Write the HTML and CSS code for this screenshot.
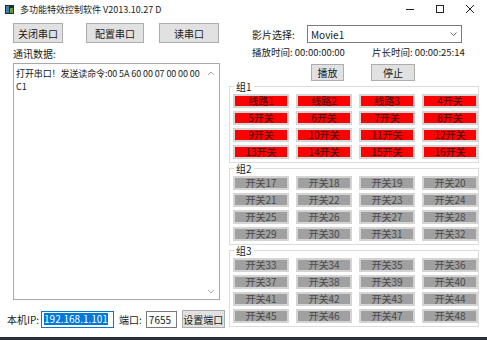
FILE: index.html
```html
<!DOCTYPE html>
<html lang="zh">
<head>
    <meta charset="UTF-8">
    <title>多功能特效控制软件</title>
    <link rel="stylesheet" href="styles.css">
</head>
<body>
    <div class="titlebar">
        <svg class="app-icon" width="9" height="9" viewBox="0 0 9 9">
            <rect width="9" height="9" fill="#1d2b33"/>
            <rect x="1" y="1" width="3" height="7" fill="#3f7fa8"/>
            <rect x="5" y="3" width="3" height="5" fill="#6a9a3a"/>
        </svg>
        <span class="title">多功能特效控制软件 V2013.10.27 D</span>
        <div class="win-ctrls">
            <svg width="10" height="10" viewBox="0 0 10 10"><path d="M1 5.5h8" stroke="#222" stroke-width="1"/></svg>
            <svg width="10" height="10" viewBox="0 0 10 10"><rect x="1.5" y="1.5" width="7" height="7" fill="none" stroke="#222" stroke-width="1"/></svg>
            <svg width="10" height="10" viewBox="0 0 10 10"><path d="M1 1l8 8M9 1l-8 8" stroke="#222" stroke-width="1"/></svg>
        </div>
    </div>
    <div class="window">
        <div class="left">
            <div class="port-btns">
                <button class="btn btn-close">关闭串口</button>
                <button class="btn btn-config">配置串口</button>
                <button class="btn btn-read">读串口</button>
            </div>
            <div class="caption">通讯数据:</div>
            <div class="log">
                <div class="log-text">打开串口！发送读命令:00 5A 60 00 07 00 00 00 C1</div>
                <div class="scroll">
                    <svg width="8" height="5" viewBox="0 0 8 5"><path d="M1 4l3-3 3 3" fill="none" stroke="#a8a8a8"/></svg>
                    <svg width="8" height="5" viewBox="0 0 8 5"><path d="M1 1l3 3 3-3" fill="none" stroke="#a8a8a8"/></svg>
                </div>
            </div>
            <div class="net-row">
                <span>本机IP:</span>
                <div class="field field-ip"><span class="selected">192.168.1.101</span></div>
                <span class="port-label">端口:</span>
                <div class="field field-port">7655</div>
                <button class="btn btn-set">设置端口</button>
            </div>
        </div>
        <div class="right">
            <div class="movie-row">
                <span class="movie-label">影片选择:</span>
                <div class="select">
                    <span>Movie1</span>
                    <svg width="7" height="4" viewBox="0 0 7 4"><path d="M0.5 0.5l3 3 3-3" fill="none" stroke="#666"/></svg>
                </div>
            </div>
            <div class="time-row">
                <span>播放时间: 00:00:00:00</span>
                <span class="length">片长时间: 00:00:25:14</span>
            </div>
            <div class="play-row">
                <button class="btn btn-play">播放</button>
                <button class="btn btn-stop">停止</button>
            </div>
            <fieldset class="group">
                <legend>组1</legend>
                <div class="switches on">
                    <div class="sw">线路1</div><div class="sw">线路2</div><div class="sw">线路3</div><div class="sw">4开关</div>
                    <div class="sw">5开关</div><div class="sw">6开关</div><div class="sw">7开关</div><div class="sw">8开关</div>
                    <div class="sw">9开关</div><div class="sw">10开关</div><div class="sw">11开关</div><div class="sw">12开关</div>
                    <div class="sw">13开关</div><div class="sw">14开关</div><div class="sw">15开关</div><div class="sw">16开关</div>
                </div>
            </fieldset>
            <fieldset class="group">
                <legend>组2</legend>
                <div class="switches">
                    <div class="sw">开关17</div><div class="sw">开关18</div><div class="sw">开关19</div><div class="sw">开关20</div>
                    <div class="sw">开关21</div><div class="sw">开关22</div><div class="sw">开关23</div><div class="sw">开关24</div>
                    <div class="sw">开关25</div><div class="sw">开关26</div><div class="sw">开关27</div><div class="sw">开关28</div>
                    <div class="sw">开关29</div><div class="sw">开关30</div><div class="sw">开关31</div><div class="sw">开关32</div>
                </div>
            </fieldset>
            <fieldset class="group">
                <legend>组3</legend>
                <div class="switches">
                    <div class="sw">开关33</div><div class="sw">开关34</div><div class="sw">开关35</div><div class="sw">开关36</div>
                    <div class="sw">开关37</div><div class="sw">开关38</div><div class="sw">开关39</div><div class="sw">开关40</div>
                    <div class="sw">开关41</div><div class="sw">开关42</div><div class="sw">开关43</div><div class="sw">开关44</div>
                    <div class="sw">开关45</div><div class="sw">开关46</div><div class="sw">开关47</div><div class="sw">开关48</div>
                </div>
            </fieldset>
        </div>
    </div>
    <div class="taskbar"></div>
</body>
</html>
```

FILE: styles.css
```css
body {
    margin: 0;
    width: 487px;
    height: 340px;
    overflow: hidden;
    background-color: #ffffff;
    font-family: "Noto Sans CJK SC", "Noto Sans", sans-serif;
    font-size: 10px;
    color: #1a1a1a;
    display: flex;
    flex-direction: column;
}
.titlebar {
    height: 18px;
    display: flex;
    align-items: center;
    padding-left: 5px;
}
.app-icon {
    margin-right: 6px;
}
.title {
    font-size: 9px;
}
.win-ctrls {
    margin-left: auto;
    display: flex;
    gap: 20px;
    padding-right: 12px;
}
.window {
    flex: 1;
    display: flex;
}
.left {
    width: 229px;
    display: flex;
    flex-direction: column;
}
.btn {
    font-family: inherit;
    font-size: 10px;
    color: #1a1a1a;
    background-color: #e1e1e1;
    border: 1px solid #adadad;
    padding: 0;
    height: 20px;
}
.port-btns {
    display: flex;
    padding: 5px 0 0 13px;
}
.btn-close {
    width: 50px;
}
.btn-config {
    width: 58px;
    margin-left: 23px;
}
.btn-read {
    width: 60px;
    margin-left: 15px;
}
.caption {
    padding: 3px 0 0 13px;
    height: 15px;
    line-height: 15px;
}
.log {
    margin: 2px 0 0 13px;
    width: 205px;
    height: 235px;
    border: 1px solid #a9a9a9;
    display: flex;
}
.log-text {
    flex: 1;
    padding: 3px 0 0 2px;
    font-size: 9px;
    letter-spacing: -0.1px;
    line-height: 13px;
}
.scroll {
    width: 16px;
    display: flex;
    flex-direction: column;
    justify-content: space-between;
    align-items: center;
    padding: 7px 0 5px;
}
.net-row {
    display: flex;
    align-items: center;
    padding: 10px 0 0 7px;
}
.field {
    height: 17px;
    border: 1px solid #7a7a7a;
    box-sizing: border-box;
    display: flex;
    align-items: center;
    padding-left: 2px;
    background-color: #fff;
}
.field-ip {
    width: 73px;
    margin-left: 2px;
    border-color: #0078d7;
}
.selected {
    background-color: #0078d7;
    color: #fff;
    line-height: 12px;
}
.port-label {
    margin-left: 5px;
}
.field-port {
    width: 31px;
    margin-left: 4px;
}
.btn-set {
    width: 43px;
    height: 18px;
    margin-left: 5px;
}
.right {
    width: 249px;
    display: flex;
    flex-direction: column;
}
.movie-row {
    display: flex;
    align-items: center;
    padding-top: 7px;
}
.movie-label {
    margin-left: 23px;
    width: 55px;
}
.select {
    width: 155px;
    height: 18px;
    box-sizing: border-box;
    border: 1px solid #7a7a7a;
    display: flex;
    align-items: center;
    justify-content: space-between;
    padding: 0 4px 0 3px;
}
.time-row {
    display: flex;
    padding: 3px 0 0 23px;
    height: 13px;
    line-height: 13px;
    font-size: 9.5px;
}
.length {
    margin-left: 27px;
}
.play-row {
    display: flex;
    padding: 5px 0 0 82px;
}
.btn-play {
    width: 33px;
    height: 17px;
}
.btn-stop {
    width: 44px;
    height: 17px;
    margin-left: 27px;
}
.group {
    margin: 0;
    border: 1px solid #dcdcdc;
    padding: 2px 0 3px 3px;
    width: 244px;
}
legend {
    padding: 0 2px;
    margin-left: 1px;
    line-height: 11px;
}
.switches {
    display: grid;
    grid-template-columns: repeat(4, 56px);
    column-gap: 7px;
    row-gap: 3px;
}
.sw {
    height: 14px;
    box-sizing: border-box;
    border: 2px solid #d4d4d4;
    background-color: #a0a0a0;
    color: #4a4a4a;
    text-align: center;
    line-height: 10px;
    font-size: 10px;
}
.switches.on .sw {
    background-color: #ff0000;
    color: #3a1010;
}
.taskbar {
    height: 3px;
    background-color: #28303a;
}
```
